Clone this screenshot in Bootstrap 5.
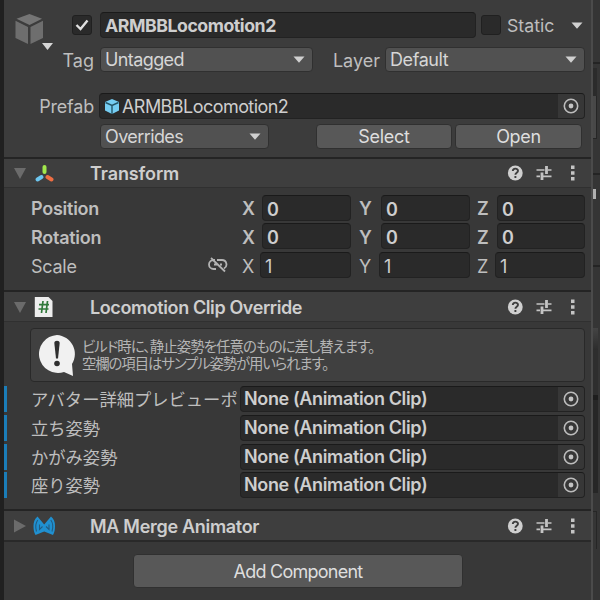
<!DOCTYPE html>
<html lang="ja">
<head>
<meta charset="utf-8">
<meta name="viewport" content="width=device-width, initial-scale=1">
<title>Inspector</title>
<link href="https://cdn.jsdelivr.net/npm/bootstrap@5.3.0/dist/css/bootstrap.min.css" rel="stylesheet">
<style>
html,body{height:600px;overflow:hidden}
body{background:#1f1f1f;color:#bebebe;font-family:Inter,"Noto Sans CJK JP",sans-serif;font-size:18px;line-height:24px;white-space:nowrap}
svg{display:block;flex:none}
.gutter{width:4px;background:#202020;flex:none}
.inspector{width:587px;background:#383838;flex:none}
.divider{width:2px;background:#4b4b4b;flex:none}
.neighbour{background:#353535}
.neighbour div{flex:none}
.object-head{height:157px;background:#3c3c3c;padding-top:12px}
.line{display:grid;align-items:center}
.line-name{grid-template-columns:68px 28px 376px 5px 20px 6px 60px 1fr;height:26px;font-size:17.7px}
.line-tag{grid-template-columns:90px 6px 213px 67px 6px 199px;height:25px;margin-top:9px}
.line-tag>span{line-height:22px;padding-top:3px}
.line-prefab{grid-template-columns:90px 5px 486px;height:26px;margin-top:21px}
.field{background:#2a2a2a;border:1px solid #222;border-top-color:#1a1a1a;border-radius:4px;height:26px;padding-left:4px;color:#cecece;overflow:hidden}
.drop{background:#515151;border:1px solid #303030;border-radius:4px;height:25px;padding:0 7px 0 4px;color:#d6d6d6;letter-spacing:-.6px}
.tool-btn{--bs-btn-bg:#585858;--bs-btn-color:#dedede;--bs-btn-border-color:#303030;--bs-btn-hover-bg:#676767;--bs-btn-hover-color:#fff;--bs-btn-padding-y:0;--bs-btn-padding-x:0;--bs-btn-border-radius:4px;--bs-btn-font-size:18px;--bs-btn-line-height:23px;height:25px;letter-spacing:-.3px}
.tick{width:20px;height:20px;background:#2a2a2a;border:1px solid #202020;border-radius:3px}
.picker{width:26px;height:24px;background:#373737;flex:none}
.component-head{height:31px;background:#3e3e3e;border-top:2px solid #242424;border-bottom:1px solid #303030;display:grid;grid-template-columns:10px 20px 56px 1fr 84px;align-items:center;font-weight:600;color:#cecece}
.head-label{padding-top:2px}
.tf-body{padding:6px 0 0 27px;height:102px}
.tf-body .field{line-height:27px}
.tf-grid{grid-template-columns:177px 34px 20px 89px 8px 22px 89px 7px 20px 88px;height:26px;margin-bottom:2.8px;letter-spacing:-.25px}
.tf-grid>span{padding-top:3px}
.wide{margin-left:-2px}
.override-body{height:188px;padding-top:6px}
.help{margin:0 6px 0 26px;height:54px;background:#404040;border:1px solid #292929;border-radius:4px;padding-left:6px}
.help-text{font-size:14.4px;line-height:17px;color:#b5b5b5;font-family:"Noto Sans CJK JP",sans-serif;margin:-2px 0 0 3px}
.help-text span{display:block;font-feature-settings:"palt"}
.clip{height:26px;margin-bottom:2.8px;display:grid;grid-template-columns:3px 24px 209px 345px;align-items:center;letter-spacing:-.36px}
.clip .field{padding-left:3px}
.clip-mark{background:#1b7db8;height:26px}
.clip-label{font-family:"Noto Sans CJK JP",sans-serif;font-size:17.3px;letter-spacing:0}
.add{width:330px;height:34px;margin:12px 0 0 129px;line-height:31px;letter-spacing:-.75px}
</style>
<script src="https://cdn.jsdelivr.net/npm/bootstrap@5.3.0/dist/js/bootstrap.bundle.min.js"></script>
</head>
<body>
<svg width="0" height="0" class="position-absolute">
<defs>
<symbol id="caret" viewBox="0 0 12 7"><path d="M.5.5h11L6 6.7z" fill="#d0d0d0"/></symbol>
<symbol id="target" viewBox="0 0 16 16"><circle cx="8" cy="8" r="6.7" fill="none" stroke="#bcbcbc" stroke-width="1.6"/><circle cx="8" cy="8" r="2.4" fill="#c4c4c4"/></symbol>
<symbol id="tools" viewBox="0 0 70 18"><circle cx="8.3" cy="9" r="7.4" fill="#cfcfcf"/><path d="M5.800 7.100C5.800 3.700 11 3.900 11 6.800 11 8.800 8.400 8.600 8.400 10.700M8.400 12v2" fill="none" stroke="#3e3e3e" stroke-width="1.9"/><path d="M29.500 6h8M41 6h3.500M29.500 12.300h3.500M36 12.300h8.500" stroke="#c4c4c4" stroke-width="1.700"/><path d="M39.500 2v8M35 8.500v7.500" stroke="#c4c4c4" stroke-width="2.800"/><path d="M64 1.500h3.500v3.500H64zM64 7.300h3.500v3.500H64zM64 13h3.500v3.500H64z" fill="#c4c4c4"/></symbol>
</defs>
</svg>
<div class="d-flex h-100">
<div class="gutter"></div>
<main class="inspector d-flex flex-column">
<section class="object-head position-relative">
<svg class="position-absolute" style="left:10px;top:12px" width="42" height="40" viewBox="0 0 42 40"><path d="M15.500 2 28 6.700 15.500 13 2.500 6.700z" fill="#757575"/><path d="M1.500 8.700 14 15v17L1.500 26zM16.500 15 29 8.700V26l-12.500 6z" fill="#6e6e6e"/><path d="M28 31h11l-5.500 7z" fill="#d6d6d6"/></svg>
<div class="line line-name">
<span></span>
<div class="tick d-flex align-items-center justify-content-center"><svg width="14" height="12" viewBox="0 0 14 12"><path d="m1.500 6 4 4L12.500 1.500" fill="none" stroke="#e0e0e0" stroke-width="2.400"/></svg></div>
<div class="field d-flex align-items-center fw-bold"><span style="letter-spacing:-.45px;padding-top:2px">ARMBBLocomotion2</span></div>
<span></span><div class="tick"></div><span></span><span style="padding-top:2px">Static</span>
<svg style="margin-left:4px" width="12" height="7"><use href="#caret"/></svg>
</div>
<div class="line line-tag">
<span class="text-end">Tag</span><span></span>
<div class="drop d-flex align-items-center justify-content-between"><span>Untagged</span><svg width="12" height="7"><use href="#caret"/></svg></div>
<span class="text-end">Layer</span><span></span>
<div class="drop d-flex align-items-center justify-content-between" style="margin-left:-1px;letter-spacing:-.4px"><span>Default</span><svg width="12" height="7"><use href="#caret"/></svg></div>
</div>
<div class="line line-prefab">
<span class="text-end" style="letter-spacing:-.2px;padding-top:2px">Prefab</span><span></span>
<div class="field d-flex align-items-center pe-0"><svg width="16" height="17" viewBox="0 0 16 17"><path d="M8 1 15 4v8.500L8 16l-7-3.500V4z" fill="#75cdf2"/><path d="m1.500 4.500 6.500 3 6.500-3M8 7.500V16" fill="none" stroke="#245669" stroke-width="1.400"/></svg><span class="me-auto" style="letter-spacing:-.55px;padding:2px 0 0 2px">ARMBBLocomotion2</span><span class="picker d-flex align-items-center justify-content-center"><svg width="16" height="16"><use href="#target"/></svg></span></div>
</div>
<div class="d-flex" style="margin:5px 0 0 96px">
<div class="drop d-flex align-items-center justify-content-between" style="width:169px"><span>Overrides</span><svg width="12" height="7"><use href="#caret"/></svg></div>
<button class="btn tool-btn" style="width:136px;margin-left:47px">Select</button>
<button class="btn tool-btn" style="width:127px;margin-left:3px">Open</button>
</div>
</section>

<section>
<div class="component-head"><span></span><svg width="12" height="12"><path d="M0 1h12L6 12z" fill="#6b6b6b"/></svg><svg width="20" height="19" viewBox="0 0 20 19"><g stroke-width="4" stroke-linecap="round"><path d="M10.500 3v5" stroke="#a2e84c"/><path d="m7.500 13-4 2.500" stroke="#6dc6ef"/><path d="m13.500 13 4 2.500" stroke="#ef6e43"/></g></svg><span class="head-label" style="letter-spacing:-.1px">Transform</span><svg width="70" height="18"><use href="#tools"/></svg></div>
<div class="tf-body">
<div class="line tf-grid fw-semibold"><span>Position</span><span></span><span>X</span><div class="field">0</div><span></span><span>Y</span><div class="field">0</div><span></span><span>Z</span><div class="field">0</div></div>
<div class="line tf-grid fw-semibold"><span>Rotation</span><span></span><span>X</span><div class="field">0</div><span></span><span>Y</span><div class="field">0</div><span></span><span>Z</span><div class="field">0</div></div>
<div class="line tf-grid"><span>Scale</span><svg width="20" height="16" viewBox="0 0 20 16"><path d="M7 3H5.500a4.500 4.500 0 0 0 0 9H8M9 3h5a4.500 4.500 0 0 1 2 8.500M6 7.500h3M12 7.500h2M3 1l14 13.500" fill="none" stroke="#b4b4b4" stroke-width="1.800"/></svg><span>X</span><div class="field wide">1</div><span></span><span>Y</span><div class="field wide">1</div><span></span><span>Z</span><div class="field wide">1</div></div>
</div>
</section>

<section>
<div class="component-head" style="height:32px"><span></span><svg width="12" height="12"><path d="M0 1h12L6 12z" fill="#6b6b6b"/></svg><svg width="20" height="22" viewBox="0 0 20 22"><path d="M.8 1h13.700l4 4v16H.8z" fill="#eee"/><path d="M9 5 7.500 17M13.500 5 12 17M5 8.700h10M4.500 13h10" stroke="#31793b" stroke-width="1.700"/></svg><span class="head-label" style="letter-spacing:-.4px">Locomotion Clip Override</span><svg width="70" height="18"><use href="#tools"/></svg></div>
<div class="override-body">
<div class="help d-flex align-items-center"><svg width="42" height="44" viewBox="0 0 42 44"><path d="M20 2a19 19 0 1 0 7 37l9 4-1-12A19 19 0 0 0 20 2z" fill="#f1f1f1"/><path d="M17.300 10c0-3 5.400-3 5.400 0L21 25.500h-2z" fill="#303030"/><circle cx="20" cy="30.500" r="2.800" fill="#303030"/></svg><div class="help-text"><span style="letter-spacing:-.9px">ビルド時に、静止姿勢を任意のものに差し替えます。</span><span style="letter-spacing:-1.1px">空欄の項目はサンプル姿勢が用いられます。</span></div></div>
<div style="height:4px"></div>
<div class="clip"><span class="clip-mark"></span><span></span><span class="clip-label">アバター詳細プレビューポ</span><div class="field d-flex align-items-center fw-semibold"><span class="me-auto">None (Animation Clip)</span><span class="picker d-flex align-items-center justify-content-center"><svg width="16" height="16"><use href="#target"/></svg></span></div></div>
<div class="clip"><span class="clip-mark"></span><span></span><span class="clip-label">立ち姿勢</span><div class="field d-flex align-items-center fw-semibold"><span class="me-auto">None (Animation Clip)</span><span class="picker d-flex align-items-center justify-content-center"><svg width="16" height="16"><use href="#target"/></svg></span></div></div>
<div class="clip"><span class="clip-mark"></span><span></span><span class="clip-label">かがみ姿勢</span><div class="field d-flex align-items-center fw-semibold"><span class="me-auto">None (Animation Clip)</span><span class="picker d-flex align-items-center justify-content-center"><svg width="16" height="16"><use href="#target"/></svg></span></div></div>
<div class="clip"><span class="clip-mark"></span><span></span><span class="clip-label">座り姿勢</span><div class="field d-flex align-items-center fw-semibold"><span class="me-auto">None (Animation Clip)</span><span class="picker d-flex align-items-center justify-content-center"><svg width="16" height="16"><use href="#target"/></svg></span></div></div>
</div>
</section>

<section style="margin-top:-1px">
<div class="component-head" style="height:33px;border-bottom:2px solid #292929"><span></span><svg width="12" height="14"><path d="M0 .5v13L12 7z" fill="#6b6b6b"/></svg><svg style="margin-left:-2px" width="24" height="20" viewBox="0 0 24 20"><path d="M5.500.5 12.200 8.500 19 .5C22 3 23 6 23 10s-.5 6-2 9l-8.800-3.500L3.500 19c-1.500-3-2-5-2-9s1-7 4-9.500z" fill="#2090d0"/><path d="M5.800 4C3.500 7 3.500 12 4.500 15.500M18.800 4c2.200 3 2.200 8 1.200 11.500M7.500 8.500v5l3-3M17 8.500v5l-3-3" fill="none" stroke="#235c80" stroke-width="1.100"/></svg><span class="head-label" style="letter-spacing:-.3px">MA Merge Animator</span><svg width="70" height="18"><use href="#tools"/></svg></div>
<button class="btn tool-btn add">Add Component</button>
</section>
</main>
<div class="divider"></div>
<aside class="neighbour flex-fill">
<div style="height:62px"></div>
<div style="height:2px;background:#242424"></div>
<div style="height:4px"></div>
<div style="height:28px;width:4px;background:#2b2b2b"></div>
<div style="height:43px;width:4px;background:#484848;border-right:1px solid #262626;border-bottom:1px solid #262626"></div>
<div style="height:34px"></div>
<div style="height:2px;background:#242424"></div>
<div style="height:14px"></div>
<div style="height:10px;width:3px;background:#b0b0b0"></div>
<div style="height:66px"></div>
<div style="height:2px;background:#242424"></div>
<div style="height:61px"></div>
<div style="height:22px;width:5px;background:linear-gradient(#444,#2c2c2c)"></div>
<div style="height:45px;width:5px;background:#2e2e2e"></div>
<div style="height:5px;width:5px;background:#1d1d1d"></div>
<div style="height:93px;width:5px;background:#262626"></div>
<div style="height:18px"></div>
<div style="height:38px;width:4px;border-top:1px solid #262626;border-right:1px solid #262626"></div>
</aside>
</div>
</body>
</html>
